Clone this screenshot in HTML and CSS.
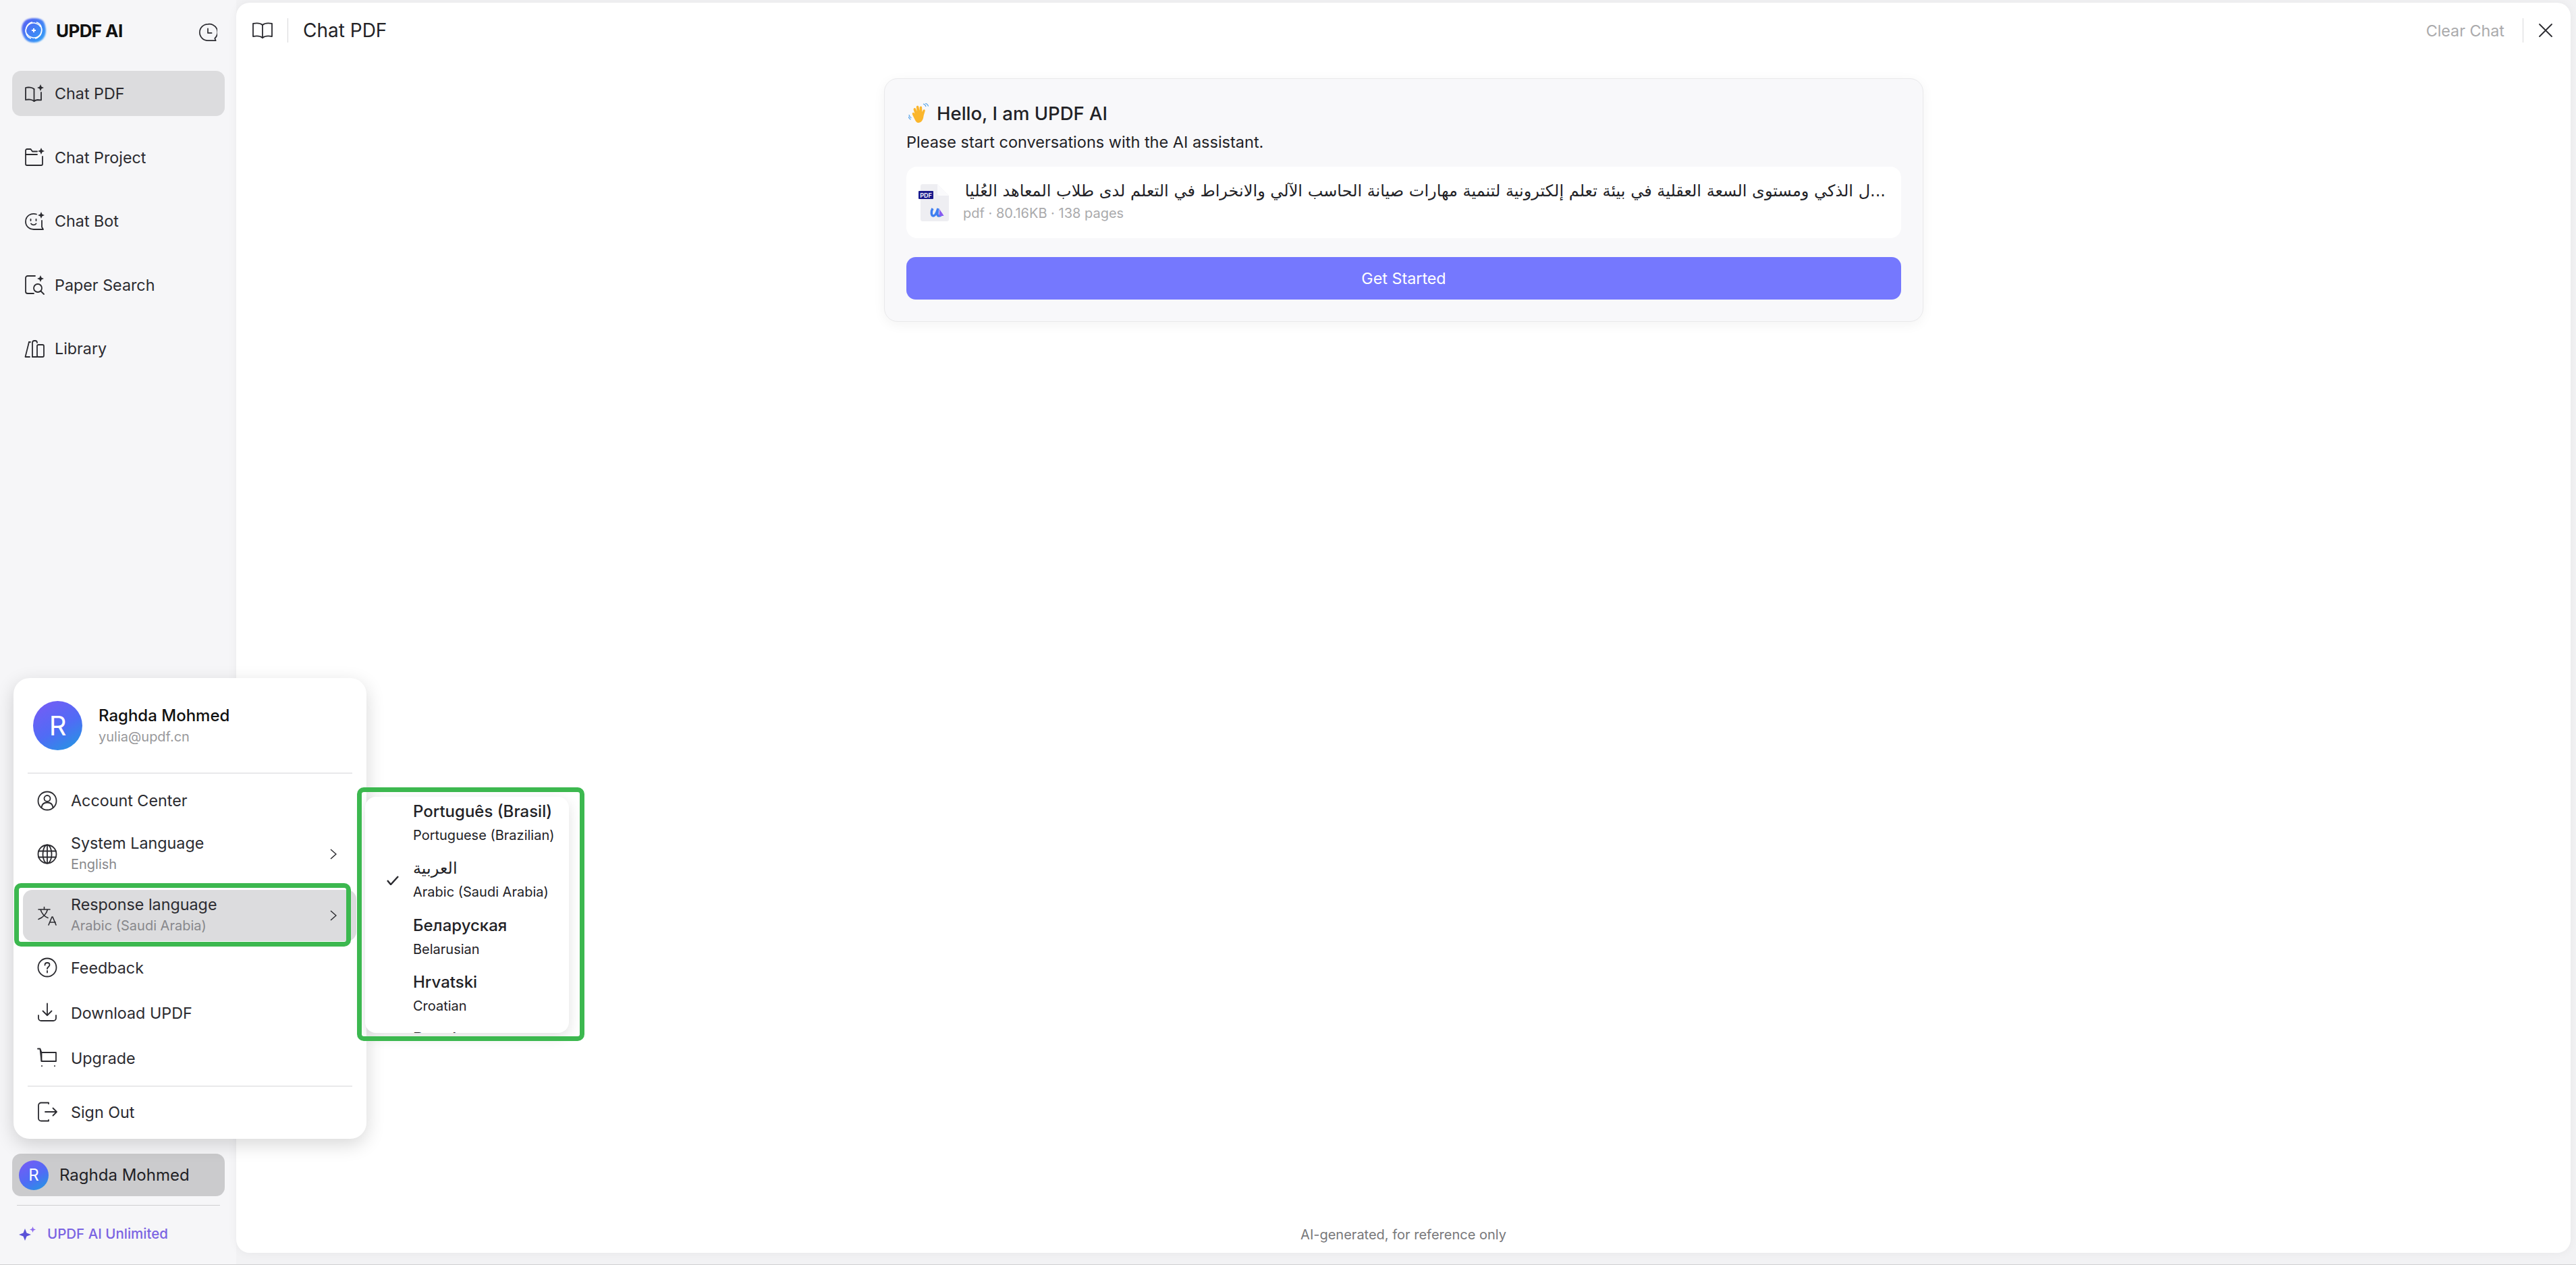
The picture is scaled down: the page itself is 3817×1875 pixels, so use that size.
FILE: index.html
```html
<!DOCTYPE html>
<html>

<head>
	<title>UPDF AI</title>
	<link rel="stylesheet" href="styles.css">
</head>
<body>
	<div class="sidebar">
		<div class="brand">
			<svg class="logo" viewBox="0 0 40 40">
				<defs>
					<linearGradient id="logoFill" x1="0" y1="0" x2="1" y2="1">
						<stop offset="0" stop-color="#5a5cf2"/>
						<stop offset="1" stop-color="#2ea4f7"/>
					</linearGradient>
					<filter id="soft"><feGaussianBlur stdDeviation="1.200"/></filter>
				</defs>
				<path d="M20 2c7 0 14 1 16 8 2 6 3 13 0 19-3 6-9 9-16 9S8 35 5 29C2 23 1 16 4 10 7 4 13 2 20 2z" fill="url(#logoFill)" filter="url(#soft)"/>
				<g fill="none" stroke="#fff" stroke-width="1.500">
					<path d="M9 25c-3-9 4-17 12-16 4 1 8 3 9 6"/>
					<path d="M31 15c3 9-4 17-12 16-4-1-8-3-9-6"/>
					<path d="M24 8c8 2 10 13 5 20-2 2-4 4-7 4"/>
					<path d="M16 32c-8-2-10-13-5-20 2-2 4-4 7-4"/>
				</g>
				<path d="M20 17v6M17 20h6" stroke="#fff" stroke-width="2"/>
			</svg>
			<span class="brand-name">UPDF AI</span>
			<svg class="icon history" viewBox="0 0 30 30">
				<path d="M15 2a13 13 0 1 0 0 26h12.500l-1.500-3.500A13 13 0 0 0 15 2z"/>
				<path d="M15 9v7h6"/>
			</svg>
		</div>

		<div class="nav">
			<div class="nav-item active">
				<svg class="icon" viewBox="0 0 30 30">
					<path d="M14.500 8C12 5.500 6 5 2 6v18c4-1 10-.5 12.500 2 1-1 3-1.700 5-2 1.500 0 3 0 5.500.3V13"/>
					<path d="M14.500 8v18"/>
					<path class="spark" d="M24 1l1.500 3.500L29 6l-3.500 1.500L24 11l-1.500-3.500L19 6l3.500-1.500z"/>
				</svg>
				<span>Chat PDF</span>
			</div>
			<div class="nav-item">
				<svg class="icon" viewBox="0 0 30 30">
					<path d="M19 6.500h-7L9.500 3H4a2 2 0 0 0-2 2v20a2 2 0 0 0 2 2h21a2 2 0 0 0 2-2V14"/>
					<path d="M2 11h17"/>
					<path class="spark" d="M25 1l1.500 3.500L30 6l-3.500 1.500L25 11l-1.500-3.500L20 6l3.500-1.500z"/>
				</svg>
				<span>Chat Project</span>
			</div>
			<div class="nav-item">
				<svg class="icon" viewBox="0 0 30 30">
					<path d="M18 4.500C10 2 2 7 2 15.500 2 22 7 27 14 27h14l-2-3.500V14"/>
					<path d="M9.500 12v2M17.500 12v2M10 18.500c2 2.500 5.500 2.500 7.500 0"/>
					<path class="spark" d="M25 1l1.500 3.500L30 6l-3.500 1.500L25 11l-1.500-3.500L20 6l3.500-1.500z"/>
				</svg>
				<span>Chat Bot</span>
			</div>
			<div class="nav-item">
				<svg class="icon" viewBox="0 0 30 30">
					<path d="M16 2H5a3 3 0 0 0-3 3v20a3 3 0 0 0 3 3h9"/>
					<circle cx="20" cy="20" r="6"/>
					<path d="M24.500 24.500L29 29"/>
					<path class="spark" d="M24 1l1.500 3.500L29 6l-3.500 1.500L24 11l-1.500-3.500L19 6l3.500-1.500z"/>
				</svg>
				<span>Paper Search</span>
			</div>
			<div class="nav-item">
				<svg class="icon" viewBox="0 0 30 30">
					<path d="M7 5L1.500 27H8"/>
					<path d="M7 5h2M12 27V6a3 3 0 0 1 3-3h1a3 3 0 0 1 3 3"/>
					<rect x="19" y="9" width="10" height="18" rx="2"/>
					<path d="M12 27h7"/>
				</svg>
				<span>Library</span>
			</div>
		</div>

		<div class="user-row">
			<div class="avatar small">R</div>
			<span>Raghda Mohmed</span>
		</div>
		<div class="side-line"></div>
		<div class="unlimited">
			<svg class="sparkle" viewBox="0 0 26 22">
				<path d="M9 3l2.500 6.500L18 12l-6.500 2.500L9 21l-2.500-6.500L0 12l6.500-2.500z" fill="#5a52d8"/>
				<path d="M20.500 0l1.200 3.300L25 4.500l-3.300 1.200L20.500 9l-1.200-3.300L16 4.500l3.300-1.200z" fill="#8f6cf0"/>
			</svg>
			<span>UPDF AI Unlimited</span>
		</div>
	</div>

	<div class="main">
		<div class="topbar">
			<svg class="icon book" viewBox="0 0 30 24">
				<path d="M15 4C12 1.500 6 1 1 2v19c5-1 11-.5 14 2 3-2.500 9-3 14-2V2c-5-1-11-.5-14 2z"/>
				<path d="M15 4v19"/>
			</svg>
			<div class="top-line"></div>
			<div class="top-title">Chat PDF</div>
			<div class="clear">Clear Chat</div>
			<div class="top-line right"></div>
			<svg class="icon close" viewBox="0 0 20 20">
				<path d="M1 1l18 18M19 1L1 19"/>
			</svg>
		</div>

		<div class="chat">
			<div class="card">
				<div class="hello">
					<svg class="wave" viewBox="0 0 30 30">
						<path d="M8 21C6 17 5 15 6.500 14c1-.6 2 .2 3 1.500L7.700 10c-.5-1.500.2-2.500 1.200-2.800 1-.3 1.800.3 2.300 1.500l1.500 3.500-.9-6c-.2-1.500.5-2.300 1.500-2.500 1-.2 1.800.5 2.100 1.800l1.100 5.500.2-4.500c.1-1.300.9-2 1.900-1.900 1 .1 1.600 1 1.600 2.300l.2 6.100 1.300-2.700c.6-1 1.500-1.300 2.300-.9.800.4 1 1.300.6 2.300l-2 6.800C22 25 19 29 14.500 29 11.500 29 9.500 24 8 21z" fill="#fbb62c"/>
						<path d="M22 1c2 .5 3.500 2 4 4M25 0c2.500.8 4 2.500 4.700 4.500M1 17c.3 2 1.500 3.800 3.500 4.700M.2 20c.5 2 1.800 3.500 3.300 4.300" fill="none" stroke="#5aa5e8" stroke-width="1.200"/>
					</svg>
					<span>Hello, I am UPDF AI</span>
				</div>
				<div class="please">Please start conversations with the AI assistant.</div>
				<div class="file">
					<svg class="file-icon" viewBox="0 0 45 55">
						<path d="M3 3a3 3 0 0 1 3-3h22l17 17v35a3 3 0 0 1-3 3H6a3 3 0 0 1-3-3z" fill="#eeeef2"/>
						<path d="M28 0l17 17H31a3 3 0 0 1-3-3z" fill="#fafafc"/>
						<rect x="0" y="10" width="22" height="12" rx="1" fill="#1a1a8c"/>
						<text x="11" y="19.500" class="pdf-tag">PDF</text>
						<path d="M21 36c-2.500 4-2.500 11 1 11 3 0 5-5 7-11-1 5-2 11 1 11 3 0 4-2 4-2" fill="none" stroke="#3f7ff0" stroke-width="3.500"/>
						<path d="M31 37c2 3 5 7 6.500 10h-7z" fill="#8a5cf0"/>
					</svg>
					<div class="file-text">
						<div class="file-name" dir="rtl" lang="ar">...ل الذكي ومستوى السعة العقلية في بيئة تعلم إلكترونية لتنمية مهارات صيانة الحاسب الآلي والانخراط في التعلم لدى طلاب المعاهد العُليا</div>
						<div class="file-meta">pdf · 80.16KB · 138 pages</div>
					</div>
				</div>
				<div class="start">Get Started</div>
			</div>
		</div>

		<div class="note">AI-generated, for reference only</div>
	</div>

	<div class="popup">
		<div class="profile">
			<div class="avatar">R</div>
			<div>
				<div class="profile-name">Raghda Mohmed</div>
				<div class="profile-mail">yulia@updf.cn</div>
			</div>
		</div>
		<div class="pop-line"></div>
		<div class="pop-item">
			<svg class="icon" viewBox="0 0 30 30">
				<circle cx="15" cy="15" r="13.500"/>
				<circle cx="15" cy="11.500" r="4.500"/>
				<path d="M6.500 25c.5-5 4-7.500 8.500-7.500s8 2.500 8.500 7.500"/>
			</svg>
			<span>Account Center</span>
		</div>
		<div class="pop-item tall">
			<svg class="icon" viewBox="0 0 30 30">
				<circle cx="15" cy="15" r="13.500"/>
				<ellipse cx="15" cy="15" rx="6.500" ry="13.500"/>
				<path d="M15 1.500v27M2 10.500h26M2 19.500h26"/>
			</svg>
			<div class="pop-text">
				<div>System Language</div>
				<div class="sub">English</div>
			</div>
			<svg class="chev" viewBox="0 0 10 16"><path d="M1 1l8 7-8 7"/></svg>
		</div>
		<div class="pop-item tall current">
			<svg class="icon" viewBox="0 0 30 30">
				<path d="M2 6h17M10.500 2.500V6M15.500 6c-1.500 6-6.500 12-13.500 14.500M5 6c1.500 5.500 6 11 11 12.500" stroke-width="1.600"/>
				<path d="M17 29l5-12h1l5 12M18.800 25h8.400" stroke-width="1.600"/>
			</svg>
			<div class="pop-text">
				<div>Response language</div>
				<div class="sub">Arabic (Saudi Arabia)</div>
			</div>
			<svg class="chev" viewBox="0 0 10 16"><path d="M1 1l8 7-8 7"/></svg>
		</div>
		<div class="pop-item">
			<svg class="icon" viewBox="0 0 30 30">
				<circle cx="15" cy="15" r="13.500"/>
				<path d="M11.500 11.500c0-2 1.500-3.500 3.500-3.500s3.500 1.400 3.500 3.300c0 2.700-3.500 2.700-3.500 5.700M15 20v2.500"/>
			</svg>
			<span>Feedback</span>
		</div>
		<div class="pop-item">
			<svg class="icon" viewBox="0 0 30 30">
				<path d="M15 1.500v17M8.500 12.500l6.500 6.500 6.500-6.500"/>
				<path d="M2 19v4a4 4 0 0 0 4 4h18a4 4 0 0 0 4-4v-4"/>
			</svg>
			<span>Download UPDF</span>
		</div>
		<div class="pop-item">
			<svg class="icon" viewBox="0 0 30 30">
				<path d="M1 1.500h3.500L6.500 7h21.500v13H6.500L4.500 2"/>
				<path d="M6.500 7v13"/>
				<circle class="dot" cx="7" cy="27" r="1"/>
				<circle class="dot" cx="26" cy="27" r="1"/>
			</svg>
			<span>Upgrade</span>
		</div>
		<div class="pop-line lower"></div>
		<div class="pop-item">
			<svg class="icon" viewBox="0 0 30 30">
				<path d="M17 3V1.500H6a4 4 0 0 0-4 4v19a4 4 0 0 0 4 4h11V27"/>
				<path d="M12 15h17M23.500 9.500L29 15l-5.500 5.500"/>
			</svg>
			<span>Sign Out</span>
		</div>
	</div>

	<div class="submenu">
		<div class="lang">
			<div class="lang-name">Português (Brasil)</div>
			<div class="lang-sub">Portuguese (Brazilian)</div>
		</div>
		<div class="lang">
			<svg class="check" viewBox="0 0 18 14"><path d="M1 7l5 6L17 1"/></svg>
			<div class="lang-name arabic" lang="ar">العربية</div>
			<div class="lang-sub">Arabic (Saudi Arabia)</div>
		</div>
		<div class="lang">
			<div class="lang-name">Беларуская</div>
			<div class="lang-sub">Belarusian</div>
		</div>
		<div class="lang">
			<div class="lang-name">Hrvatski</div>
			<div class="lang-sub">Croatian</div>
		</div>
		<div class="lang">
			<div class="lang-name">Dansk</div>
		</div>
	</div>

	<div class="mark mark-row"></div>
	<div class="mark mark-menu"></div>
</body>

</html>
```

FILE: styles.css
```css
* {
	box-sizing: border-box;
}

html, body {
	margin: 0;
	height: 100%;
}

body {
	display: flex;
	height: 1875px;
	overflow: hidden;
	background-color: #f2f2f4;
	border-bottom: 1px solid #cfcfd1;
	font-family: Inter, "Noto Sans", sans-serif;
	font-size: 23.300px;
	color: #222226;
}

.icon {
	width: 30px;
	height: 30px;
	flex: none;
	fill: none;
	stroke: #2b2b30;
	stroke-width: 1.8;
	stroke-linecap: round;
	stroke-linejoin: round;
}

.icon .spark, .icon .dot {
	fill: #2b2b30;
	stroke: none;
}

/* left column */
.sidebar {
	width: 350px;
	flex: none;
	display: flex;
	flex-direction: column;
	padding: 25px 17px 0 18px;
	background-color: #f6f6f8;
}

.brand {
	display: flex;
	align-items: center;
	height: 40px;
	padding-left: 12px;
}

.logo {
	width: 40px;
	height: 40px;
	flex: none;
}

.brand-name {
	margin-left: 13px;
	font-size: 26px;
	font-weight: 700;
	letter-spacing: -0.6px;
	color: #111;
}

.history {
	width: 28px;
	height: 28px;
	margin-left: auto;
	margin-top: 6px;
	margin-right: 11px;
}

.nav {
	margin-top: 40px;
	display: flex;
	flex-direction: column;
	gap: 27.500px;
}

.nav-item {
	display: flex;
	align-items: center;
	height: 67px;
	padding-left: 18px;
	gap: 15px;
	border-radius: 13px;
	color: #2b2b30;
}

.nav-item.active {
	background-color: #dcdcde;
}

.user-row {
	display: flex;
	align-items: center;
	height: 63px;
	margin-top: auto;
	padding-left: 10px;
	gap: 16px;
	border-radius: 13px;
	background-color: #cbcbcd;
	font-size: 24px;
}

.side-line {
	height: 1px;
	margin: 13px 7px 0;
	background-color: #cfcfd1;
}

.unlimited {
	display: flex;
	align-items: center;
	height: 87px;
	padding: 0 0 4px 10px;
	gap: 16px;
	font-size: 20.500px;
	font-weight: 500;
	color: #7a63e2;
}

.sparkle {
	width: 26px;
	height: 22px;
	flex: none;
}

.avatar {
	display: flex;
	align-items: center;
	justify-content: center;
	width: 73px;
	height: 73px;
	flex: none;
	border-radius: 50%;
	background: linear-gradient(150deg, #7a5af5 0%, #4f6cf5 55%, #1f9be0 100%);
	color: #fff;
	font-size: 40px;
}

.avatar.small {
	width: 44px;
	height: 44px;
	font-size: 24px;
}

/* right panel */
.main {
	flex: 1;
	display: flex;
	flex-direction: column;
	margin: 4px 8px 17px 0;
	border-radius: 20px;
	background-color: #fff;
	box-shadow: 0 0 14px rgba(0, 0, 0, 0.05);
}

.topbar {
	display: flex;
	align-items: center;
	height: 82px;
	flex: none;
	padding: 0 27px 0 24px;
}

.book {
	width: 30px;
	height: 24px;
}

.top-line {
	width: 1px;
	height: 36px;
	margin-left: 22px;
	background-color: #d8d8da;
}

.top-title {
	margin-left: 22px;
	font-size: 28px;
}

.clear {
	margin-left: auto;
	color: #aaaaac;
}

.top-line.right {
	margin-left: 27px;
}

.close {
	width: 20px;
	height: 20px;
	margin-left: 23px;
}

.chat {
	flex: 1;
	padding-top: 30px;
	display: flex;
	justify-content: center;
	align-items: flex-start;
}

.card {
	width: 1540px;
	height: 361px;
	padding: 0 32px;
	margin-left: 1px;
	border: 1px solid #e9e9eb;
	border-radius: 20px;
	background-color: #f8f8fa;
	box-shadow: 0 4px 18px rgba(0, 0, 0, 0.05);
}

.hello {
	display: flex;
	align-items: center;
	gap: 12px;
	margin-top: 36px;
	padding-left: 3px;
	height: 30px;
	font-size: 27.500px;
	font-weight: 500;
}

.wave {
	width: 30px;
	height: 30px;
}

.please {
	margin-top: 13px;
	font-size: 23.500px;
	line-height: 30px;
}

.file {
	display: flex;
	align-items: center;
	height: 106px;
	margin-top: 21px;
	padding: 0 23px 0 18px;
	gap: 21px;
	border-radius: 16px;
	background-color: #fff;
}

.file-icon {
	width: 45px;
	height: 55px;
	flex: none;
}

.pdf-tag {
	font-size: 9px;
	font-weight: 600;
	fill: #fff;
	text-anchor: middle;
}

.file-text {
	flex: 1;
	min-width: 0;
	margin-bottom: 4px;
}

.file-name {
	font-family: "DejaVu Sans", sans-serif;
	font-size: 24px;
	line-height: 36px;
	white-space: nowrap;
	overflow: hidden;
}

.file-meta {
	font-size: 20px;
	line-height: 30px;
	color: #aaaaac;
}

.start {
	display: flex;
	align-items: center;
	justify-content: center;
	height: 63px;
	margin-top: 28px;
	border-radius: 14px;
	background-color: #7578fe;
	color: #fff;
}

.note {
	height: 54px;
	flex: none;
	text-align: center;
	font-size: 20px;
	line-height: 54px;
	color: #77777a;
}

/* account menu */
.popup {
	position: absolute;
	left: 20px;
	top: 1005px;
	width: 523px;
	height: 683px;
	display: flex;
	flex-direction: column;
	padding: 0 21px;
	border-radius: 24px;
	background-color: #fff;
	box-shadow: 0 8px 28px rgba(0, 0, 0, 0.16);
}

.profile {
	display: flex;
	align-items: center;
	height: 140px;
	flex: none;
	padding-left: 8px;
	gap: 24px;
}

.profile-name {
	font-size: 24px;
	font-weight: 500;
	color: #111;
}

.profile-mail {
	margin-top: 5px;
	font-size: 20px;
	color: #98989b;
}

.pop-line {
	height: 2px;
	flex: none;
	margin-bottom: 6px;
	background-color: #e9e9eb;
}

.pop-line.lower {
	margin: 7px 0 4px;
}

.pop-item {
	position: relative;
	display: flex;
	align-items: center;
	height: 67px;
	flex: none;
	padding-left: 14px;
	gap: 20px;
	color: #2b2b30;
}

.pop-item.tall {
	height: 76px;
	margin: 7.500px -6px 7.500px -7px;
	padding-left: 21px;
	border-radius: 14px;
}

.pop-item.current {
	margin-bottom: 6px;
	background-color: #dcdcde;
}

.pop-text {
	margin-bottom: 4px;
}

.pop-item .sub {
	margin-top: 5px;
	font-size: 20px;
	color: #88888c;
}

.chev {
	position: absolute;
	right: 29px;
	top: 30px;
	width: 10px;
	height: 16px;
	fill: none;
	stroke: #2b2b30;
	stroke-width: 1.500;
}

/* language list */
.submenu {
	position: absolute;
	left: 541px;
	top: 1181px;
	width: 302px;
	height: 350px;
	overflow: hidden;
	border-radius: 16px;
	background-color: #fff;
	box-shadow: 0 6px 20px rgba(0, 0, 0, 0.12);
}

.lang {
	position: relative;
	height: 84.250px;
	padding: 4px 0 0 71px;
}

.lang-name {
	font-size: 24px;
	font-weight: 500;
	line-height: 36px;
	white-space: nowrap;
}

.lang-name.arabic {
	font-family: "DejaVu Sans", sans-serif;
	font-weight: 400;
}

.lang-sub {
	font-size: 20px;
	line-height: 34px;
	white-space: nowrap;
}

.check {
	position: absolute;
	left: 32px;
	top: 33px;
	width: 18px;
	height: 14px;
	fill: none;
	stroke: #2b2b30;
	stroke-width: 2.500;
}

/* annotation boxes */
.mark {
	position: absolute;
	border: 7px solid #3cb84f;
	border-radius: 10px;
}

.mark-row {
	left: 21px;
	top: 1309px;
	width: 499px;
	height: 94px;
}

.mark-menu {
	left: 529px;
	top: 1167px;
	width: 337px;
	height: 376px;
}
```
